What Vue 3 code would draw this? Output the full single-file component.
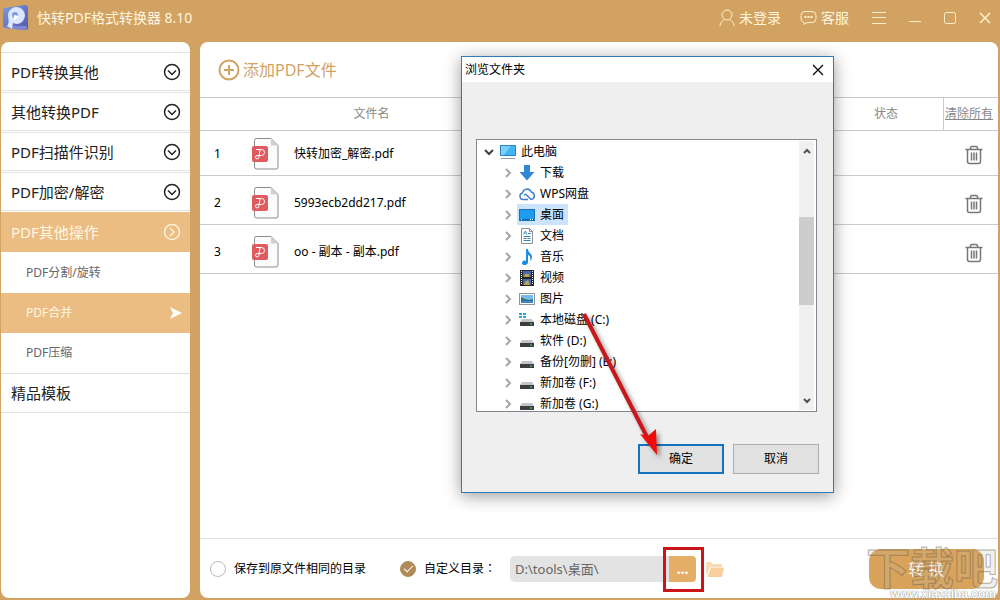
<template>
  <div class="app">
    <header class="titlebar">
      <svg class="logo" width="28" height="28" viewBox="0 0 28 28">
        <defs>
          <linearGradient id="logoFill" x1="0" y1="0" x2="1" y2="1">
            <stop offset="0" stop-color="#7d9be0" />
            <stop offset="1" stop-color="#5156b0" />
          </linearGradient>
        </defs>
        <path d="M3 4 24 1q3 0 3 3v20q0 2-2 2L4 24q-2 0-2-2V6q0-2 1-2z" fill="url(#logoFill)" />
        <path d="M3 22 26 22v2q0 2-2 2L4 24q-2 0-1-2z" fill="#7f86d2" />
        <path d="M6 22c3-3 1-8 1-11a8.500 8.500 0 1 1 9 9c-2 0-3-1-4-1l-1 6z" fill="#dbe7fc" />
        <circle cx="14" cy="11" r="3" fill="#7f9be2" />
        <path d="M13 11v6l5-5z" fill="#fff" />
      </svg>
      <h1>快转PDF格式转换器 8.10</h1>
      <div class="account">
        <button type="button">
          <svg width="16" height="18" viewBox="0 0 16 18">
            <circle cx="8" cy="6" r="5" />
            <path d="M1 17c0-3 2-5 4.500-6.500M15 17c0-3-2-5-4.500-6.500" />
          </svg>
          未登录
        </button>
        <button type="button">
          <svg width="17" height="16" viewBox="0 0 17 16">
            <path d="M5 1.500h7a4 4 0 0 1 4 4v3a4 4 0 0 1-4 4H7l-3 2v-2a4 4 0 0 1-3-4v-3a4 4 0 0 1 4-4z" />
            <path d="M4.500 7h2M7.500 7h2M10.500 7h2" stroke-width="2" />
          </svg>
          客服
        </button>
      </div>
      <div class="window-buttons">
        <button type="button" aria-label="菜单">
          <svg width="14" height="14" viewBox="0 0 14 14"><path d="M0 1.500h14M0 6.500h14M0 12.500h14" /></svg>
        </button>
        <button type="button" aria-label="最小化">
          <svg width="12" height="14" viewBox="0 0 12 14"><path d="M0 10.500h12" /></svg>
        </button>
        <button type="button" aria-label="最大化">
          <svg width="12" height="14" viewBox="0 0 12 14"><rect x="0.500" y="1.500" width="11" height="11" rx="2" /></svg>
        </button>
        <button type="button" aria-label="关闭">
          <svg width="12" height="14" viewBox="0 0 12 14"><path d="M1 2l10 10M11 2 1 12" stroke-width="1.500" /></svg>
        </button>
      </div>
    </header>

    <div class="body">
      <nav class="sidebar">
        <template v-for="group in groups" :key="group.name">
          <button type="button" class="group" :class="{ open: group.children }">
            {{ group.name }}
            <svg v-if="!group.leaf" width="18" height="18" viewBox="0 0 18 18">
              <circle cx="9" cy="9" r="7.500" />
              <path v-if="group.children" d="M7 5l4 4-4 4" />
              <path v-else d="M5 7.500l4 4 4-4" />
            </svg>
          </button>
          <div v-if="group.children" class="children">
            <button
              v-for="child in group.children"
              :key="child"
              type="button"
              class="child"
              :class="{ active: child === page }"
              @click="page = child"
            >
              {{ child }}
              <svg v-if="child === page" width="12" height="12" viewBox="0 0 12 12">
                <path d="M0 0 12 6 0 12 3 6z" fill="#fff" />
              </svg>
            </button>
          </div>
        </template>
      </nav>

      <main class="main">
        <div class="toolbar">
          <button type="button" class="add">
            <svg width="22" height="22" viewBox="0 0 22 22">
              <circle cx="11" cy="11" r="9.500" />
              <path d="M11 6v10M6 11h10" />
            </svg>
            添加PDF文件
          </button>
        </div>

        <div class="files">
          <table>
            <colgroup>
              <col class="c-index" />
              <col class="c-icon" />
              <col class="c-name" />
              <col />
              <col class="c-status" />
              <col class="c-remove" />
            </colgroup>
            <thead>
              <tr>
                <th colspan="3">文件名</th>
                <th></th>
                <th>状态</th>
                <th class="clear"><a href="#" @click.prevent="files = []">清除所有</a></th>
              </tr>
            </thead>
            <tbody>
              <tr v-for="(file, i) in files" :key="file">
                <td class="index">{{ i + 1 }}</td>
                <td>
                  <svg width="28" height="32" viewBox="0 0 28 32">
                    <path d="M4.500 .500H19l7 7V29q0 2-2 2H4.500q-2 0-2-2V2.500q0-2 2-2z" fill="#fbfbfb" stroke="#8b8b8b" />
                    <path d="M19 1v6.500h6.500z" fill="#d0d0d0" />
                    <rect y="8" width="16" height="16" rx="2" fill="#df5b60" />
                    <path
                      d="M4 11.500h5.500a3 3 0 0 1 0 6H5.200a1.700 1.700 0 1 0 1.700 1.700L8 12"
                      fill="none"
                      stroke="#fff"
                    />
                  </svg>
                </td>
                <td>{{ file }}</td>
                <td></td>
                <td></td>
                <td class="remove">
                  <button type="button" aria-label="删除" @click="files.splice(i, 1)">
                    <svg width="18" height="20" viewBox="0 0 18 20">
                      <path d="M.500 4.500h17M5.500 4V3q0-1.500 1.500-1.500h4q1.500 0 1.500 1.500v1M2.500 5v11.500q0 2 2 2h9q2 0 2-2V5" />
                      <path d="M6.500 7.500v8M9 7.500v8M11.500 7.500v8" />
                    </svg>
                  </button>
                </td>
              </tr>
            </tbody>
          </table>
        </div>

        <footer class="output">
          <label class="choice same">
            <input v-model="target" type="radio" value="same" />
            保存到原文件相同的目录
          </label>
          <label class="choice custom">
            <input v-model="target" type="radio" value="custom" />
            自定义目录：
          </label>
          <input v-model="path" class="path" type="text" aria-label="输出目录" />
          <div class="picker">
            <button type="button" @click="dialogOpen = true">...</button>
            <span class="marker"></span>
          </div>
          <button type="button" class="open-folder" aria-label="打开目录">
            <svg width="19" height="16" viewBox="0 0 19 16">
              <path d="M0 2q0-1 1-1h4l2 2h8q1 0 1 1v2H4L1 14q-1 0-1-1z" fill="#fadbb2" />
              <path d="M5 6.500h12q1.500 0 1 1L16 15q0 1-1 1H1.500z" fill="#f9d09c" />
            </svg>
          </button>
          <button type="button" class="convert">转 换</button>
          <div class="watermark">
            <span class="mark">下载吧</span>
            <span class="site">www.xiazaiba.com</span>
          </div>
        </footer>
      </main>
    </div>

    <section v-if="dialogOpen" class="dialog" role="dialog" aria-label="浏览文件夹">
      <div class="dialog-title">
        <h2>浏览文件夹</h2>
        <button type="button" aria-label="关闭" @click="dialogOpen = false">
          <svg width="12" height="12" viewBox="0 0 12 12"><path d="M1 1l10 10M11 1 1 11" fill="none" stroke="#000" stroke-width="1.200" /></svg>
        </button>
      </div>
      <div class="tree">
        <ul>
          <li v-for="node in nodes" :key="node.name" :class="{ root: node.icon === 'pc' }" @click="selected = node.name">
            <svg class="chevron" width="12" height="12" viewBox="0 0 12 12">
              <path v-if="node.icon === 'pc'" d="M2 4l4 4 4-4" stroke="#404040" />
              <path v-else d="M4 2l4 4-4 4" stroke="#a6a6a6" />
            </svg>
            <span class="node" :class="{ selected: node.name === selected }">
              <svg width="16" height="16" viewBox="0 0 16 16">
                <g v-if="node.icon === 'pc'">
                  <rect x=".500" y="1.500" width="15" height="10" fill="#44b4ee" stroke="#2d85bf" />
                  <path d="M1 2h10L4 11H1z" fill="#7bd0f7" />
                  <path d="M1 14.500h14" stroke="#8f9ba3" />
                </g>
                <path v-else-if="node.icon === 'down'" d="M5 0h6v7h4.500L8 15.500.500 7H5z" fill="#2f87d6" />
                <path
                  v-else-if="node.icon === 'cloud'"
                  d="M9 13.500H4a3.300 3.300 0 0 1-.500-6.500 4.600 4.600 0 0 1 8.800-1 3.800 3.800 0 0 1-.300 7.500L7.500 9Q6 7.500 5 9.500"
                  fill="none"
                  stroke="#3f80d0"
                  stroke-width="1.500"
                />
                <g v-else-if="node.icon === 'desktop'">
                  <rect x=".500" y="2.500" width="15" height="11" fill="#1e9cf0" stroke="#1770b8" />
                  <path d="M1 12.500h14" stroke="#0c63a8" />
                  <path d="M2 12.500h1M11 12.500h1M13 12.500h1" stroke="#fff" />
                </g>
                <g v-else-if="node.icon === 'doc'">
                  <path d="M2.500.500h8l3 3v12h-11z" fill="#fff" stroke="#8a9196" />
                  <path d="M10.500.500v3h3" fill="none" stroke="#8a9196" />
                  <path d="M4.500 6.500 6.500 3l1 3.500M9 5.500h3M4.500 8.500h7M4.500 10.500h3M8.500 10.500h3M4.500 12.500h7" fill="none" stroke="#3584b8" />
                </g>
                <path
                  v-else-if="node.icon === 'music'"
                  d="M7 0h2c0 4 4 4 4 8 0 2-1 3-2 4 1-4 0-5-2-6v7c0 4-6 4-6 1 0-2 2-3 4-2z"
                  fill="#1c8de0"
                />
                <g v-else-if="node.icon === 'video'">
                  <path d="M1 0h14v16H1z" fill="#25272b" />
                  <path d="M2.500 1v14M13.500 1v14" stroke="#fff" stroke-dasharray="1 1" />
                  <path d="M4 1h8v6H4zM4 9h8v6H4z" fill="#4769b4" />
                  <path d="M6 4h4v3H5zM6 12l3-2 2 5H5z" fill="#c1a24d" />
                </g>
                <g v-else-if="node.icon === 'image'">
                  <rect x=".500" y="2.500" width="15" height="11" fill="#fff" stroke="#90979c" />
                  <path d="M2 4h12v8H2z" fill="#75bdec" />
                  <path d="M2 6l4 2 4 1 4-1v2H2z" fill="#366f82" />
                  <path d="M2 10h12v2H2z" fill="#3789cc" />
                </g>
                <g v-else>
                  <path d="M3 7h10l2 3H1z" fill="#c2c5c7" />
                  <path d="M1 10h14v4H1z" fill="#3c3f42" />
                  <path d="M11 12h2" stroke="#53df77" />
                  <path v-if="node.icon === 'system'" d="M0 1h3v2H0zM4 1h3v2H4zM0 4h3v2H0zM4 4h3v2H4z" fill="#22aed8" />
                </g>
              </svg>
              {{ node.name }}
            </span>
          </li>
        </ul>
        <div class="scrollbar">
          <svg width="10" height="8" viewBox="0 0 10 8"><path d="M2 6l3-3 3 3" /></svg>
          <div class="track"><div class="thumb"></div></div>
          <svg width="10" height="8" viewBox="0 0 10 8"><path d="M2 3l3 3 3-3" /></svg>
        </div>
      </div>
      <div class="dialog-buttons">
        <button type="button" class="ok" @click="dialogOpen = false">确定</button>
        <button type="button" @click="dialogOpen = false">取消</button>
      </div>
      <svg class="arrow" width="90" height="150" viewBox="0 0 90 150">
        <path d="M6 5 70 130" fill="none" stroke="#c9181c" stroke-width="4" />
        <path d="M79 146 62 125l8 2 8-7z" fill="#f00a0a" />
      </svg>
    </section>
  </div>
</template>

<script setup>
import { ref } from "vue";

const page = ref("PDF合并");
const target = ref("custom");
const path = ref("D:\\tools\\桌面\\");
const dialogOpen = ref(true);
const selected = ref("桌面");

const groups = [
  { name: "PDF转换其他" },
  { name: "其他转换PDF" },
  { name: "PDF扫描件识别" },
  { name: "PDF加密/解密" },
  { name: "PDF其他操作", children: ["PDF分割/旋转", "PDF合并", "PDF压缩"] },
  { name: "精品模板", leaf: true },
];

const files = ref(["快转加密_解密.pdf", "5993ecb2dd217.pdf", "oo - 副本 - 副本.pdf"]);

const nodes = [
  { name: "此电脑", icon: "pc" },
  { name: "下载", icon: "down" },
  { name: "WPS网盘", icon: "cloud" },
  { name: "桌面", icon: "desktop" },
  { name: "文档", icon: "doc" },
  { name: "音乐", icon: "music" },
  { name: "视频", icon: "video" },
  { name: "图片", icon: "image" },
  { name: "本地磁盘 (C:)", icon: "system" },
  { name: "软件 (D:)", icon: "disk" },
  { name: "备份[勿删] (E:)", icon: "disk" },
  { name: "新加卷 (F:)", icon: "disk" },
  { name: "新加卷 (G:)", icon: "disk" },
];
</script>

<style>
body {
  margin: 0;
  background: #d2a263;
}
</style>

<style scoped>
.app {
  position: relative;
  display: flex;
  flex-direction: column;
  min-height: 100vh;
  overflow: hidden;
  box-sizing: border-box;
  padding-bottom: 2px;
  background: #d2a263;
  color: #000;
  font-family: "Noto Sans", "Noto Sans CJK SC", sans-serif;
  font-size: 12px;
  line-height: 18px;
}

button {
  padding: 0;
  border: 0;
  background: none;
  color: inherit;
  font: inherit;
  cursor: pointer;
}

svg {
  display: block;
  flex: none;
}

.titlebar {
  display: flex;
  align-items: center;
  height: 36px;
  padding: 0 9px 6px 1px;
  color: #fff6df;
  font-size: 14px;
}

.titlebar h1 {
  margin: 0 auto 0 8px;
  font-size: 14px;
  font-weight: 400;
}

.account,
.window-buttons {
  display: flex;
  align-items: center;
  gap: 19px;
}

.account button {
  display: flex;
  align-items: center;
  gap: 4px;
}

.account svg,
.window-buttons svg {
  fill: none;
  stroke: #fff0cc;
}

.window-buttons {
  gap: 23px;
  margin-left: 23px;
}

.body {
  display: flex;
  flex: 1;
  gap: 10px;
  padding: 0 2px 0 1px;
}

.sidebar {
  flex: 0 0 189px;
  padding-top: 10px;
  border-radius: 8px;
  box-sizing: border-box;
  background: #fff;
}

.group {
  display: flex;
  align-items: center;
  justify-content: space-between;
  width: 100%;
  height: 39px;
  margin-bottom: 1px;
  padding: 0 9px 0 10px;
  border: solid #e2e2e2;
  border-width: 1px 0;
  color: #222;
  font-size: 15px;
}

.group svg {
  fill: none;
  stroke: #222;
  stroke-width: 1.5;
}

.group.open {
  height: 40px;
  margin: 0;
  border-color: #ebbd82;
  background: #ebbd82;
  color: #fff6e4;
}

.group.open svg {
  stroke: #fff2d8;
}

.children {
  padding-top: 1px;
  border-bottom: 1px solid #e2e2e2;
}

.children + .group {
  border-top: 0;
}

.child {
  display: flex;
  align-items: center;
  justify-content: space-between;
  width: 100%;
  height: 40px;
  padding: 0 8px 0 25px;
  color: #666;
}

.child.active {
  background: #ebbd82;
  color: #fff6e4;
}

.main {
  display: flex;
  flex: 1;
  flex-direction: column;
  min-width: 0;
  border-radius: 8px;
  background: #fff;
}

.toolbar {
  display: flex;
  align-items: center;
  height: 55px;
  padding-left: 18px;
}

.add {
  display: flex;
  align-items: center;
  gap: 3px;
  color: #d2a263;
  font-size: 16px;
}

.add svg {
  fill: none;
  stroke: #d2a263;
  stroke-width: 2;
}

.files {
  flex: 1;
}

table {
  width: 100%;
  table-layout: fixed;
  border-collapse: separate;
  border-spacing: 0;
}

.c-index {
  width: 52px;
}

.c-icon {
  width: 42px;
}

.c-name {
  width: 249px;
}

.c-status {
  width: 114px;
}

.c-remove {
  width: 55px;
}

th {
  height: 32px;
  padding: 0;
  border: solid #c3ccd1;
  border-width: 1px 0;
  color: #888;
  font-weight: 400;
}

.clear {
  border-left-width: 1px;
  padding-left: 1px;
  text-align: left;
}

.clear a {
  color: #888;
}

td {
  height: 43px;
  padding: 5px 0 0;
  border-bottom: 1px solid #c3ccd1;
}

tr:first-child td {
  padding-top: 1px;
}

.index {
  padding-left: 14px;
}

.remove button {
  display: block;
  margin: 2px 0 0 22px;
}

.remove svg {
  fill: none;
  stroke: #777;
  stroke-width: 1.5;
}

.output {
  position: relative;
  display: flex;
  align-items: center;
  height: 59px;
  padding: 0 14px 0 10px;
  border-top: 1px solid #e2e2e2;
}

.choice {
  display: flex;
  align-items: center;
  gap: 8px;
}

.same {
  margin-right: 34px;
}

.custom {
  margin-right: 14px;
  font-family: "Noto Sans", "Noto Sans CJK TC", sans-serif;
}

.choice input {
  display: flex;
  justify-content: center;
  width: 16px;
  height: 16px;
  margin: 0;
  border: 1px solid #bbb;
  border-radius: 50%;
  box-sizing: border-box;
  appearance: none;
}

.choice input:checked {
  border-color: #b08a58;
  background: #b08a58;
}

.choice input:checked::after {
  content: "";
  width: 8px;
  height: 4px;
  margin-top: 3px;
  border: solid #fff;
  border-width: 0 0 1px 1px;
  transform: rotate(-45deg);
}

.path {
  width: 159px;
  height: 26px;
  padding: 0 5px;
  border: 0;
  border-radius: 5px 0 0 5px;
  box-sizing: border-box;
  background: #e3e3e3;
  color: #666;
  font: inherit;
  font-size: 13px;
}

.picker {
  position: relative;
}

.picker button {
  display: block;
  width: 27px;
  height: 26px;
  border-radius: 0 4px 4px 0;
  background: #e5ae66;
  color: #fff;
  font-size: 14px;
  font-weight: 700;
}

.marker {
  position: absolute;
  inset: -9px -8px -10px -6px;
  border: 3px solid #cc1318;
  pointer-events: none;
}

.open-folder {
  margin-left: 10px;
}

.convert {
  width: 115px;
  height: 40px;
  margin-left: auto;
  border-radius: 12px;
  background: #d9a35c;
  color: #fff;
  font-size: 16px;
}

.watermark {
  position: absolute;
  right: 0;
  bottom: -2px;
  pointer-events: none;
}

.mark {
  display: block;
  color: rgba(190, 180, 165, 0.2);
  font-size: 44px;
  font-weight: 700;
  line-height: 64px;
  white-space: nowrap;
  -webkit-text-stroke: 1px rgba(110, 95, 75, 0.5);
}

.site {
  position: absolute;
  right: 2px;
  bottom: 0;
  color: #fff;
  font-family: "Liberation Sans", sans-serif;
  font-weight: 700;
  line-height: 12px;
  text-shadow: 0 0 1px #888, 0 0 1px #888;
}

.dialog {
  position: absolute;
  top: 56px;
  left: 461px;
  width: 371px;
  border: 1px solid #2f7bb5;
  background: #efefef;
  box-shadow: 0 3px 16px rgba(0, 0, 0, 0.4);
}

.dialog-title {
  display: flex;
  align-items: center;
  justify-content: space-between;
  height: 25px;
  padding: 0 9px 0 3px;
  background: #fff;
}

.dialog-title h2 {
  margin: 0;
  font-size: 12px;
  font-weight: 400;
}

.tree {
  display: flex;
  height: 271px;
  margin: 57px 16px 0 14px;
  overflow: hidden;
  border: 1px solid #828790;
  background: #fff;
}

.tree ul {
  flex: 1;
  margin: 0;
  padding: 1px 0 0;
  list-style: none;
}

.tree li {
  display: flex;
  align-items: center;
  height: 21px;
  padding-left: 25px;
}

.tree li.root {
  padding-left: 6px;
}

.chevron {
  margin-right: 3px;
  fill: none;
  stroke-width: 2;
}

.node {
  display: flex;
  align-items: center;
  gap: 5px;
  height: 21px;
  padding: 0 4px 0 2px;
  white-space: nowrap;
}

.node.selected {
  background: #cce4fb;
}

.scrollbar {
  display: flex;
  flex-direction: column;
  align-items: center;
  justify-content: space-between;
  width: 15px;
  margin: 1px 2px 1px 0;
  padding: 6px 0;
  background: #f0f0f0;
}

.scrollbar svg {
  fill: none;
  stroke: #505050;
  stroke-width: 2;
}

.track {
  flex: 1;
  width: 100%;
}

.thumb {
  height: 88px;
  margin-top: 62px;
  background: #cdcdcd;
}

.dialog-buttons {
  display: flex;
  justify-content: flex-end;
  gap: 9px;
  padding: 32px 14px 18px;
}

.dialog-buttons button {
  width: 86px;
  height: 30px;
  border: 1px solid #adadad;
  background: #e1e1e1;
}

.dialog-buttons .ok {
  border: 2px solid #1673bd;
}

.arrow {
  position: absolute;
  top: 252px;
  left: 116px;
  filter: drop-shadow(3px 3px 2px rgba(0, 0, 0, 0.4));
  pointer-events: none;
}
</style>
